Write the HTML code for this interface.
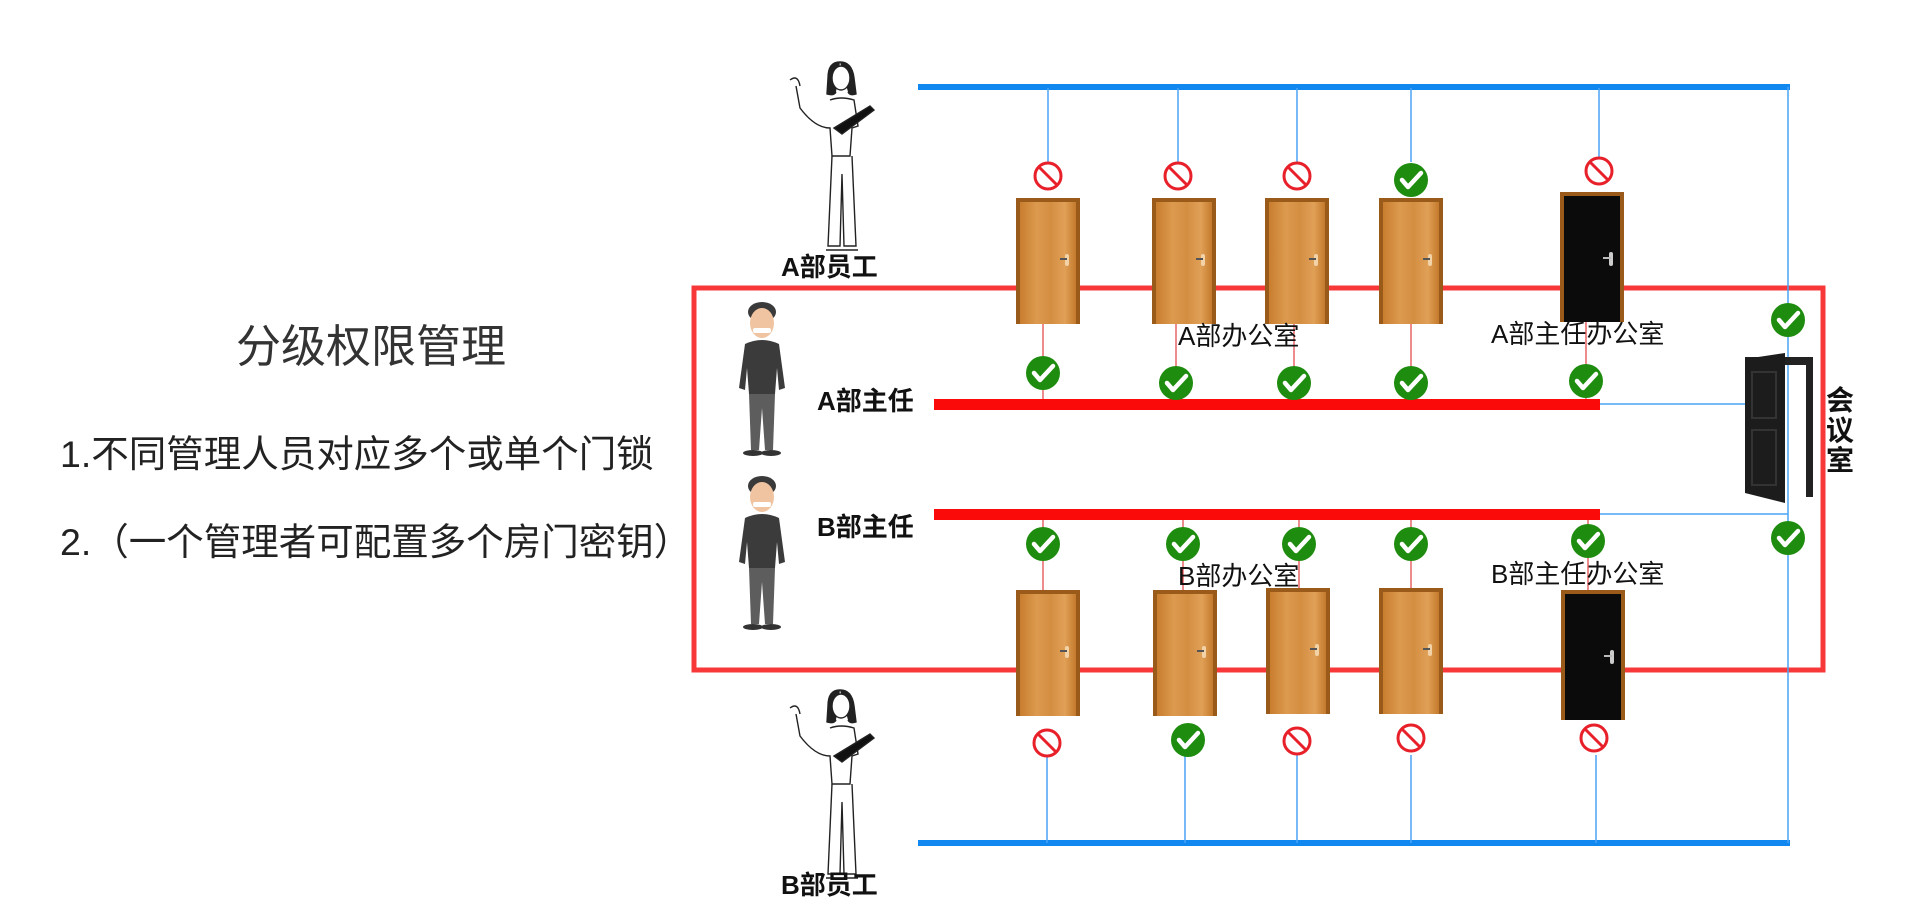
<!DOCTYPE html>
<html><head><meta charset="utf-8"><style>
html,body{margin:0;padding:0;background:#fff;}
body{width:1920px;height:906px;overflow:hidden;position:relative;font-family:"Liberation Sans","Noto Sans CJK SC",sans-serif;}
</style></head><body>
<svg width="1920" height="906" viewBox="0 0 1920 906" xmlns="http://www.w3.org/2000/svg" style="position:absolute;left:0;top:0">
<defs>
<linearGradient id="wood" x1="0" x2="1" y1="0" y2="0">
<stop offset="0" stop-color="#c97d2e"/><stop offset="0.3" stop-color="#dc9a4f"/><stop offset="0.55" stop-color="#d48e42"/><stop offset="0.8" stop-color="#e0a057"/><stop offset="1" stop-color="#c47a2c"/>
</linearGradient>
<g id="door">
<rect x="0" y="0" width="64" height="126" fill="#9a5a1a"/>
<rect x="4" y="4" width="56" height="122" fill="url(#wood)"/>
<rect x="49" y="56" width="4" height="12" rx="2" fill="#f2d3a8"/>
<rect x="44" y="60" width="7" height="2" fill="#555"/>
</g>
<g id="bdoor">
<rect x="0" y="0" width="64" height="130" fill="#9a5a1a"/>
<rect x="4" y="4" width="56" height="126" fill="#0b0b0b"/>
<rect x="49" y="60" width="4" height="14" rx="2" fill="#ccc"/>
<rect x="43" y="65" width="8" height="2" fill="#bbb"/>
</g>
<g id="no">
<circle cx="0" cy="0" r="13" fill="#fff" stroke="#e8202a" stroke-width="3"/>
<line x1="-9" y1="-9" x2="9" y2="9" stroke="#e8202a" stroke-width="3"/>
</g>
<g id="ok">
<circle cx="0" cy="0" r="17" fill="#1e8c0e"/>
<path d="M-9 0 L-3 7 L10 -7" fill="none" stroke="#fff" stroke-width="4.5" stroke-linecap="round" stroke-linejoin="round"/>
</g>
<g id="man">
<ellipse cx="27" cy="14" rx="14" ry="10" fill="#3a3a3a"/>
<ellipse cx="27" cy="25" rx="12" ry="15" fill="#f0c4a0"/>
<rect x="18" y="30" width="18" height="5" rx="2" fill="#fff"/>
<path d="M10 46 Q27 38 44 46 L50 90 L44 92 L42 70 L40 96 L14 96 L12 70 L10 92 L4 90 Z" fill="#3b3b3b"/>
<path d="M14 96 L40 96 L38 152 L30 152 L27 110 L24 152 L16 152 Z" fill="#5d5d5d"/>
<ellipse cx="18" cy="155" rx="10" ry="3" fill="#333"/><ellipse cx="36" cy="155" rx="10" ry="3" fill="#333"/>
</g>
<g id="woman" fill="none" stroke="#222" stroke-width="1.4">
<path d="M70 6 Q58 6 58 22 L57 38 Q64 40 66 36 M70 6 Q82 6 84 22 L86 38 Q80 40 78 36" fill="#222"/>
<ellipse cx="71" cy="22" rx="9" ry="12" fill="#fff"/>
<path d="M60 44 Q71 40 84 44 L88 70 L82 72 L80 100 L62 100 L60 72 Q45 72 30 52 L26 30"/>
<path d="M20 24 Q28 18 30 30"/>
<path d="M64 72 L100 50 L104 54 L72 78 Z" fill="#111"/>
<path d="M62 100 L58 190 L70 190 L72 118 L74 190 L86 190 L82 100"/>
<path d="M56 194 L72 194 M72 194 L88 194"/>
</g>
</defs>

<!-- text -->
<text x="236" y="362" font-size="45" fill="#333">分级权限管理</text>
<text x="60" y="467" font-size="37.5" fill="#222">1.不同管理人员对应多个或单个门锁</text>
<text x="60" y="555" font-size="37.5" fill="#222">2.（一个管理者可配置多个房门密钥）</text>

<!-- red rect -->
<rect x="694" y="288" width="1129" height="382" fill="none" stroke="#f83838" stroke-width="5"/>

<!-- blue lines -->
<line x1="918" y1="87" x2="1790" y2="87" stroke="#1188f0" stroke-width="6"/>
<line x1="918" y1="843" x2="1790" y2="843" stroke="#1188f0" stroke-width="6"/>
<line x1="1788" y1="87" x2="1788" y2="843" stroke="#4aa3f5" stroke-width="1.5"/>
<g stroke="#4aa3f5" stroke-width="1.5">
<line x1="1048" y1="88" x2="1048" y2="162"/><line x1="1178" y1="88" x2="1178" y2="162"/><line x1="1297" y1="88" x2="1297" y2="162"/><line x1="1411" y1="88" x2="1411" y2="162"/><line x1="1599" y1="88" x2="1599" y2="158"/>
<line x1="1047" y1="755" x2="1047" y2="843"/><line x1="1185" y1="755" x2="1185" y2="843"/><line x1="1297" y1="755" x2="1297" y2="843"/><line x1="1411" y1="755" x2="1411" y2="843"/><line x1="1596" y1="755" x2="1596" y2="843"/>
<line x1="1599" y1="404" x2="1745" y2="404"/><line x1="1599" y1="514" x2="1788" y2="514"/>
</g>
<g stroke="#e04040" stroke-width="1.2">
<line x1="1043" y1="324" x2="1043" y2="404"/><line x1="1176" y1="324" x2="1176" y2="404"/><line x1="1294" y1="324" x2="1294" y2="404"/><line x1="1411" y1="324" x2="1411" y2="404"/><line x1="1586" y1="322" x2="1586" y2="404"/>
<line x1="1043" y1="514" x2="1043" y2="590"/><line x1="1183" y1="514" x2="1183" y2="590"/><line x1="1299" y1="514" x2="1299" y2="590"/><line x1="1411" y1="514" x2="1411" y2="590"/><line x1="1588" y1="514" x2="1588" y2="590"/>
</g>

<rect x="934" y="399" width="666" height="11" fill="#fb0a0a"/>
<rect x="934" y="509" width="666" height="11" fill="#fb0a0a"/>

<use href="#door" x="1016" y="198"/><use href="#door" x="1152" y="198"/><use href="#door" x="1265" y="198"/><use href="#door" x="1379" y="198"/>
<use href="#bdoor" x="1560" y="192"/>
<use href="#door" x="1016" y="590"/><use href="#door" x="1153" y="590"/><use href="#door" x="1266" y="588"/><use href="#door" x="1379" y="588"/>
<use href="#bdoor" x="1561" y="590"/>

<rect x="1745" y="357" width="68" height="8" fill="#222"/>
<rect x="1806" y="357" width="7" height="140" fill="#222"/>
<path d="M1745 359 L1785 353 L1785 503 L1745 493 Z" fill="#1c1c1c"/>
<rect x="1752" y="372" width="24" height="46" fill="none" stroke="#333" stroke-width="2"/>
<rect x="1752" y="430" width="24" height="55" fill="none" stroke="#333" stroke-width="2"/>

<use href="#no" x="1048" y="176"/><use href="#no" x="1178" y="176"/><use href="#no" x="1297" y="176"/><use href="#ok" x="1411" y="180"/><use href="#no" x="1599" y="171"/>
<use href="#ok" x="1043" y="373"/><use href="#ok" x="1176" y="383"/><use href="#ok" x="1294" y="383"/><use href="#ok" x="1411" y="383"/><use href="#ok" x="1586" y="381"/>
<use href="#ok" x="1788" y="320"/><use href="#ok" x="1788" y="538"/>
<use href="#ok" x="1043" y="544"/><use href="#ok" x="1183" y="544"/><use href="#ok" x="1299" y="544"/><use href="#ok" x="1411" y="544"/><use href="#ok" x="1588" y="541"/>
<use href="#no" x="1047" y="743"/><use href="#ok" x="1188" y="740"/><use href="#no" x="1297" y="741"/><use href="#no" x="1411" y="738"/><use href="#no" x="1594" y="738"/>

<use href="#woman" x="770" y="56"/>
<use href="#woman" x="770" y="684"/>
<use href="#man" x="735" y="298"/>
<use href="#man" x="735" y="472"/>

<g font-weight="bold" font-size="26" fill="#111">
<text x="781" y="276">A部员工</text>
<text x="781" y="894">B部员工</text>
<text x="817" y="410">A部主任</text>
<text x="817" y="536">B部主任</text>
<text x="1178" y="345" font-weight="normal">A部办公室</text>
<text x="1178" y="585" font-weight="normal">B部办公室</text>
<text x="1491" y="343" font-weight="normal">A部主任办公室</text>
<text x="1491" y="583" font-weight="normal">B部主任办公室</text>
<text x="1826" y="410" font-size="28">会</text>
<text x="1826" y="440" font-size="28">议</text>
<text x="1826" y="470" font-size="28">室</text>
</g>
</svg>
</body></html>
